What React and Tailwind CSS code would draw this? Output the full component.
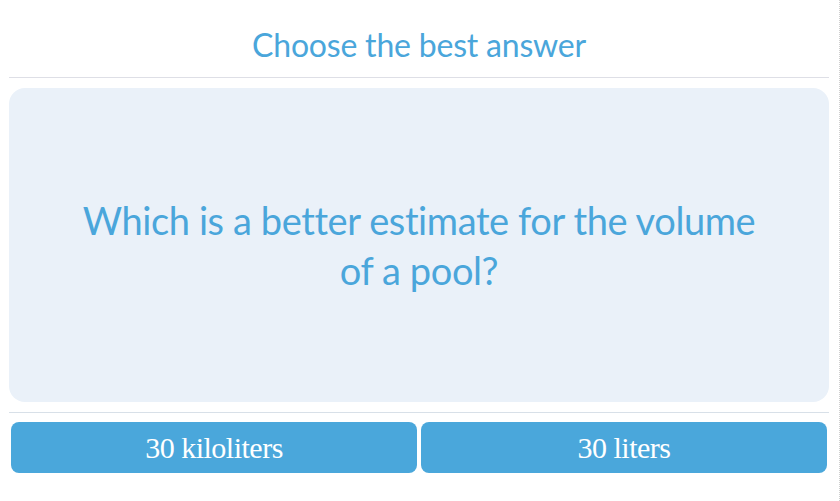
export default function App() {
  const answers = ['30 kiloliters', '30 liters']

  return (
    <div className="w-[840px] h-[501px] bg-white border-r border-dotted border-[#cfcfcf] font-['Lato','Noto_Sans',sans-serif]">
      <div className="pl-[9px] pr-[10px]">
        {/* Title */}
        <div className="h-[78px] flex items-center justify-center border-b border-[#dedfe6] pt-[13px]">
          <h1 className="text-[32px] text-[#4aa6db] tracking-[-0.2px]">Choose the best answer</h1>
        </div>

        {/* Question card */}
        <div className="mt-[10px] h-[314px] bg-[#eaf1f9] rounded-[16px] flex items-center justify-center px-[40px]">
          <p className="text-center text-[38px] leading-[50px] text-[#4aa6db] tracking-[-0.4px] max-w-[690px]">
            Which is a better estimate for the volume of a pool?
          </p>
        </div>

        <div className="mt-[10px] border-t border-[#d8e0e8]" />

        {/* Answers */}
        <div className="flex gap-[4px] px-[2px] mt-[9px]">
          {answers.map(a => (
            <button
              key={a}
              className="flex-1 h-[51px] rounded-[8px] bg-[#4aa7db] text-white text-[30px] tracking-[-0.5px] font-['Liberation_Serif','Times_New_Roman',serif] flex items-center justify-center"
            >
              {a}
            </button>
          ))}
        </div>
      </div>
    </div>
  )
}
